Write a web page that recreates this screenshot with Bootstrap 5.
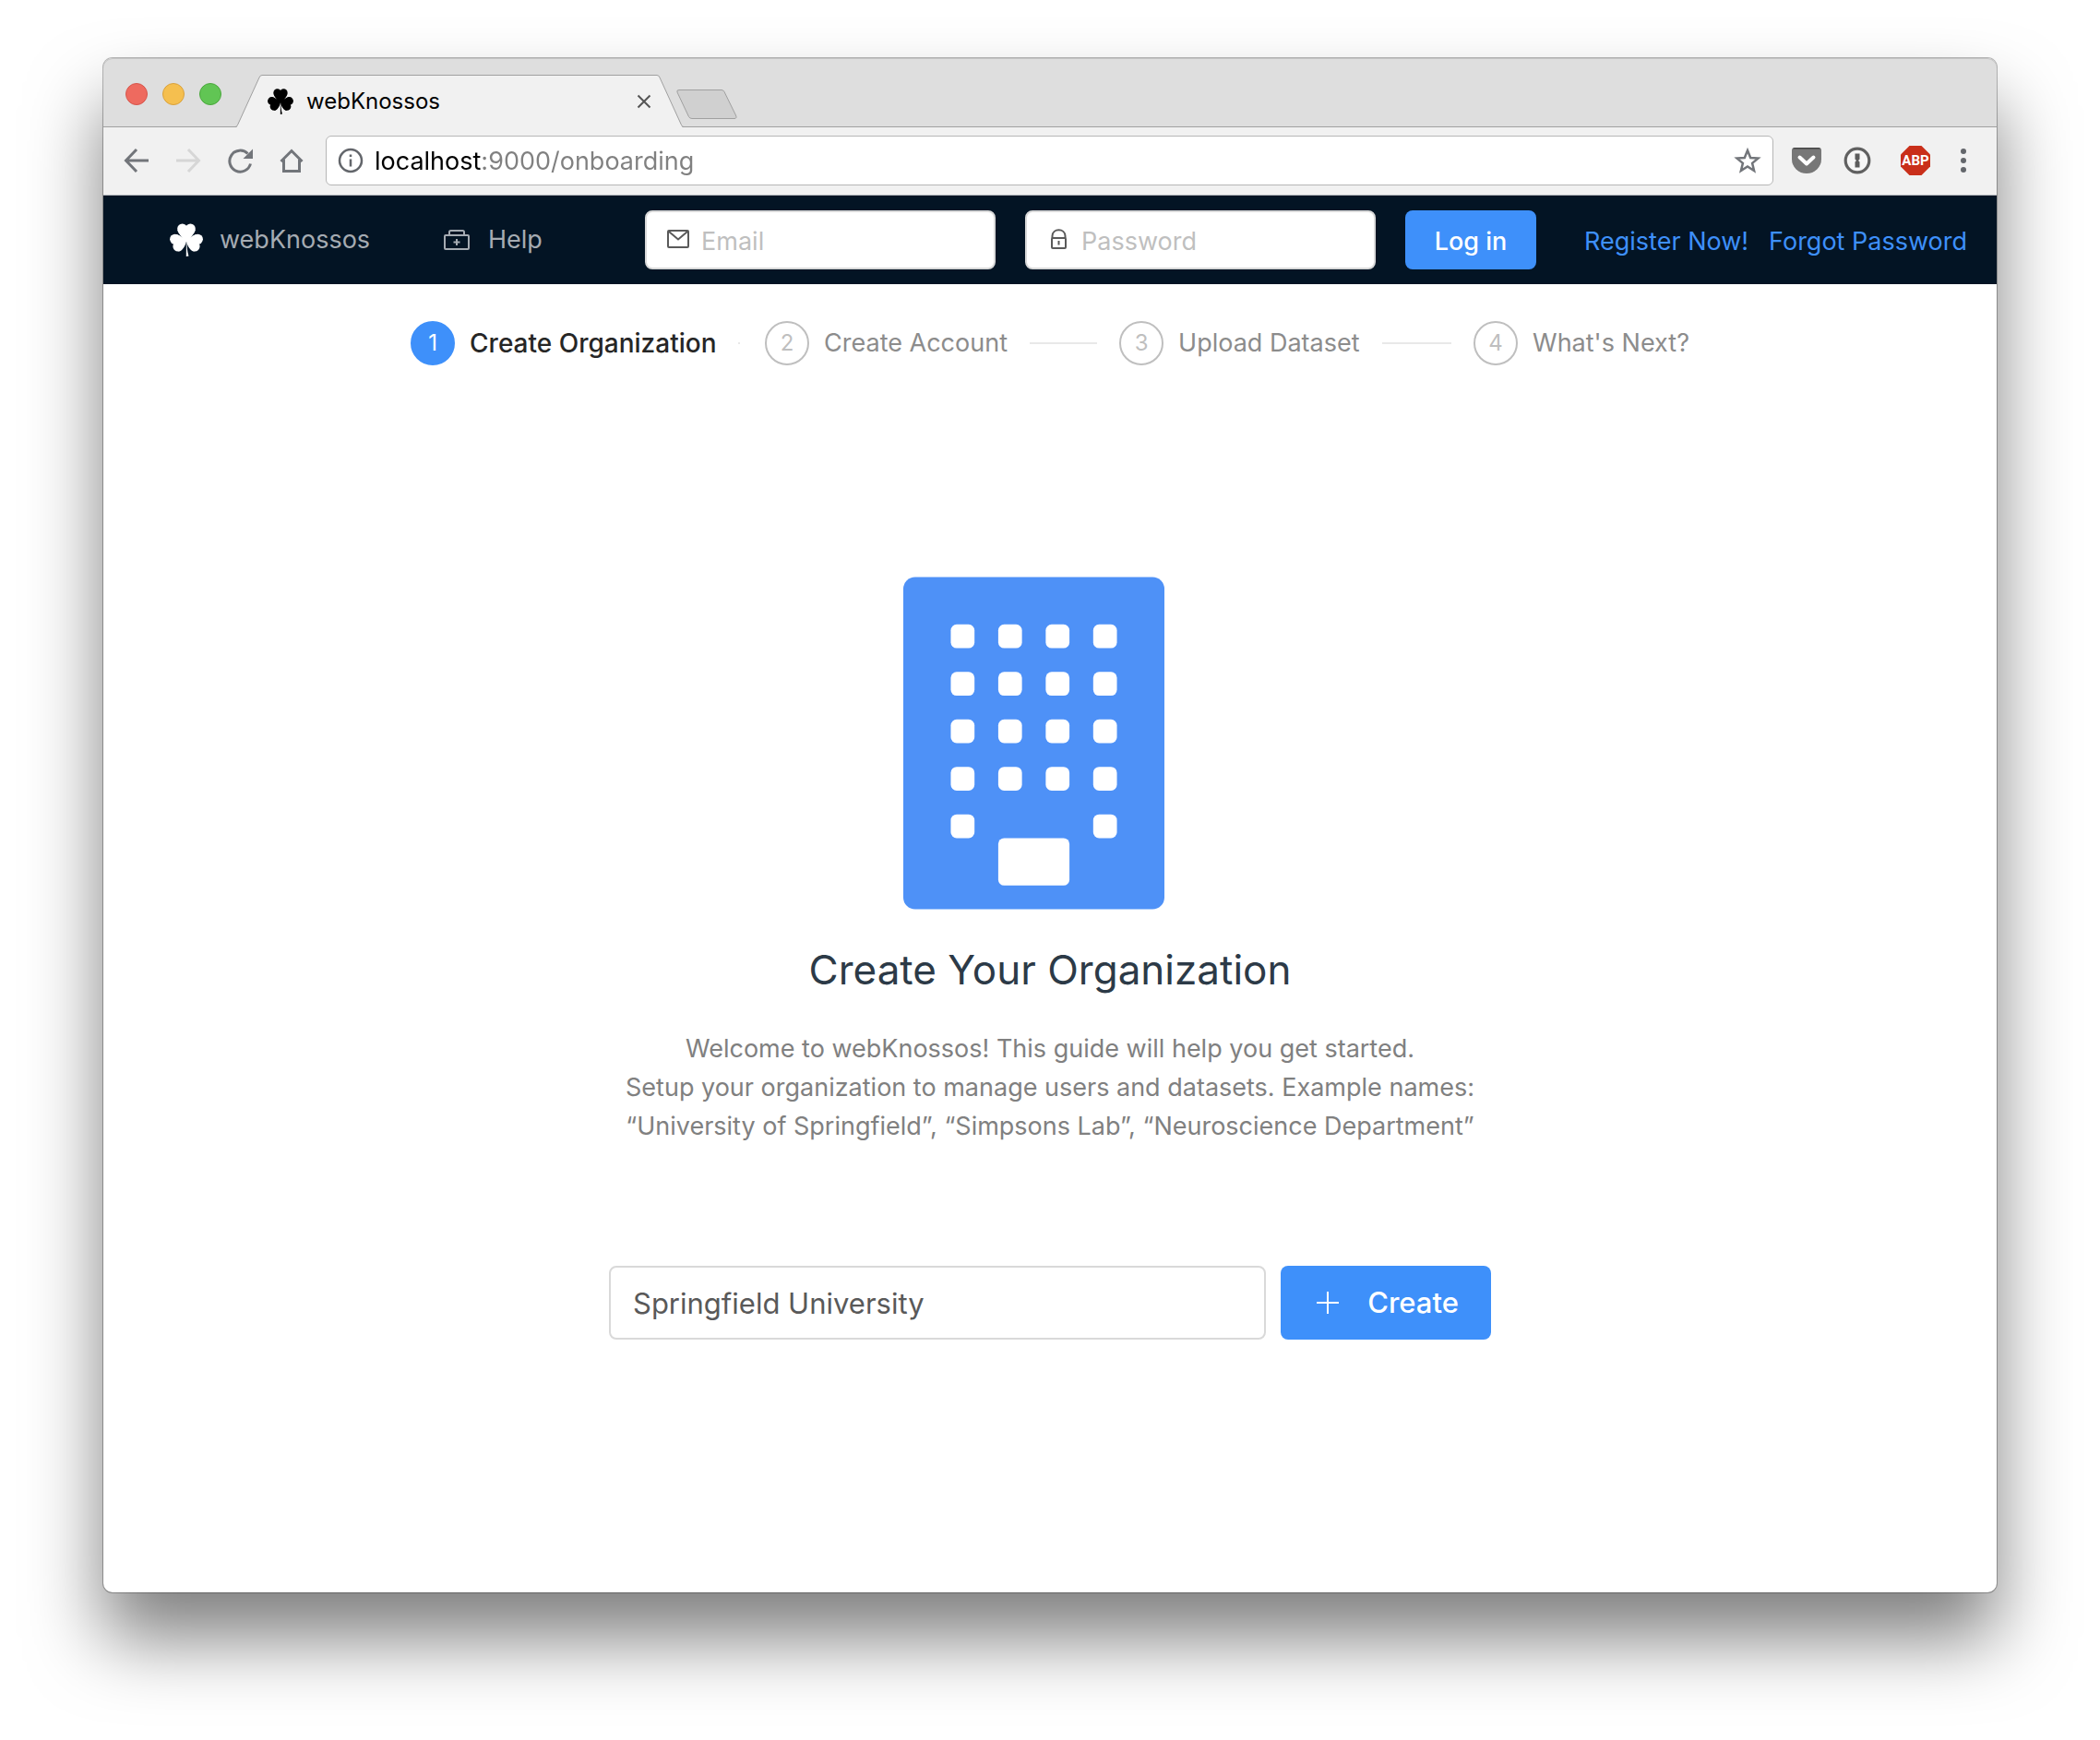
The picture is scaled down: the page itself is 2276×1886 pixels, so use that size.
<!DOCTYPE html>
<html lang="en">
<head>
<meta charset="utf-8">
<meta name="viewport" content="width=device-width, initial-scale=1">
<title>webKnossos</title>
<link href="https://cdn.jsdelivr.net/npm/bootstrap@5.3.0/dist/css/bootstrap.min.css" rel="stylesheet">
<style>
  :root { --wk-blue: #3e90fa; --wk-navy: #031424; --chrome-line: #a0a0a0; }
  body { font-family: Inter, "Liberation Sans", sans-serif; font-size: 27px; line-height: 42px; background: #fff; padding: 63px 112px 160px; }
  svg { display: block; flex: none; }
  .browser { min-height: calc(100vh - 223px); border-radius: 10px; background: #fff;
    box-shadow: 0 0 0 1px rgba(0,0,0,.28), 0 50px 80px rgba(0,0,0,.5); }
  .tabstrip { height: 75px; background: #dedede; border-radius: 10px 10px 0 0; box-shadow: inset 0 1px #c4c4c4, inset 0 -1px var(--chrome-line); padding-left: 24px; }
  .light { width: 24px; height: 24px; border-radius: 50%; border: 1px solid; padding: 0; }
  .light-close { background: #ee6a5f; border-color: #d6554b; }
  .light-min { background: #f5bf4f; border-color: #d9a13c; }
  .light-max { background: #61c554; border-color: #4aa73c; }
  .lights { gap: 16px; margin-bottom: 24px; }
  .page-tab { width: 486px; height: 57px; margin-left: 15px; padding: 0 35px 0 35px; gap: 14px; font-size: 24px; color: #000; }
  .page-tab .tab-shape { position: absolute; inset: 0; z-index: 0; }
  .page-tab > :not(.tab-shape) { position: relative; z-index: 1; }
  .icon-btn { border: 0; background: none; padding: 0; color: #72757a; }
  .newtab { margin: 0 0 9px -8px; }
  .toolbar { height: 74px; background: #f1f1f1; border-bottom: 1px solid #b0b3b8; padding: 0 32px 2px 20px; }
  .nav-icons { gap: 26px; padding-right: 23px; }
  .address { height: 54px; border: 1px solid #b6b6b6; border-radius: 6px; background: #fff; padding: 0 12px; gap: 12px; }
  .address input { border: 0; outline: 0; padding: 2px 0 0; color: transparent; caret-color: #000;
    background: linear-gradient(90deg, #000 116px, #808080 116px); -webkit-background-clip: text; background-clip: text; }
  .wk-nav { background: var(--wk-navy); padding: 16px 32px 16px 72px; color: #a5abb2; }
  .wk-nav a { text-decoration: none; }
  .brand-link, .help-link { color: inherit; }
  .brand-link { gap: 18px; width: 297px; }
  .help-link { gap: 20px; }
  .login-row { gap: 32px; }
  .field { width: 380px; height: 64px; border: 2px solid #d9d9d9; border-radius: 8px; background: #fff; padding: 0 20px 0 22px; gap: 13px; }
  .field input { border: 0; outline: 0; padding: 0; background: none; color: #5a5a5a; }
  .field input::placeholder { color: #bfbfbf; opacity: 1; }
  .wk-btn { background: var(--wk-blue); color: #fff; border: 0; border-radius: 8px; font-size: inherit; font-weight: 500; line-height: 42px; }
  .wk-btn:hover { background: #2f7fe8; color: #fff; }
  .login-btn { width: 142px; height: 64px; padding: 0; }
  .field input, .login-btn, .auth-links { padding-top: 4px; }
  .auth-links { gap: 22px; padding-left: 20px; }
  .auth-links a { color: var(--wk-blue); }
  .steps { padding-top: 40px; color: #8c8c8c; }
  .step { width: 384px; gap: 16px; }
  .step:last-child { width: auto; }
  .step-num { width: 48px; height: 48px; border: 2px solid #bfbfbf; border-radius: 50%; color: #bfbfbf; font-size: 24px; flex: none; }
  .step-active { color: #262626; font-weight: 500; font-size: 28px; }
  .step-active .step-num { background: var(--wk-blue); border-color: var(--wk-blue); color: #fff; font-weight: 400; }
  .step-line { height: 2px; background: #e8e8e8; margin: 0 24px 0 8px; min-width: 2px; }
  .intro { padding-bottom: 45px; color: #808080; }
  .building { margin-right: 36px; }
  .intro h1 { font-size: 44px; line-height: 60px; font-weight: 400; color: #2c3a47; margin: 35px 0; }
  .intro p { margin-bottom: 130px; }
  .org-form { width: 956px; max-width: 100%; gap: 16px; font-size: 31px; }
  .org-input { height: 80px; border: 2px solid #d9d9d9; border-radius: 8px; padding: 0 24px; font-size: inherit; color: #595959; }
  .create-btn { width: 228px; height: 80px; gap: 31px; padding: 0 0 0 4px; }
</style>
<script src="https://cdn.jsdelivr.net/npm/bootstrap@5.3.0/dist/js/bootstrap.bundle.min.js"></script>
</head>
<body>
<svg width="0" height="0" class="position-absolute" aria-hidden="true">
  <symbol id="clover" viewBox="0 0 36 36">
    <g fill="currentColor">
      <circle cx="13.600" cy="5.800" r="5.400"/><circle cx="22.400" cy="5.800" r="5.400"/>
      <path d="M8.300 7C9 12 13.500 14 15.500 20h5C22.500 14 27 12 27.700 7L18 3z"/>
      <circle cx="5.700" cy="17.300" r="5.600"/><circle cx="9" cy="25" r="5.600"/>
      <path d="M7 11.900C11 12.500 14 16 18 18.500 17.500 24 14 29.500 9.500 30.500L3 20z"/>
      <circle cx="30.300" cy="17.300" r="5.600"/><circle cx="27" cy="25" r="5.600"/>
      <path d="M29 11.900C25 12.500 22 16 18 18.500 18.500 24 22 29.500 26.500 30.500L33 20z"/>
      <path d="M17.700 20h.8c0 5 .4 10 2 15.500l-2.700.5C17.800 31 18 25 17.700 20z"/>
    </g>
  </symbol>
</svg>

<div class="browser d-flex flex-column">
  <header>
    <div class="tabstrip d-flex align-items-end">
      <div class="lights d-flex">
        <button class="light light-close" aria-label="Close window"></button>
        <button class="light light-min" aria-label="Minimize window"></button>
        <button class="light light-max" aria-label="Zoom window"></button>
      </div>
      <div class="page-tab position-relative d-flex align-items-center">
        <svg class="tab-shape" width="486" height="57" viewBox="0 0 486 57"><path d="M1 57C2 56.500 2 56 2.500 55L26 3Q27 .5 29 .5H457Q459 .5 460 3L483.500 55Q484 56.500 485 57z" fill="#f1f1f1"/><path d="M0 56.500Q1.500 56.500 2.500 54.500L26 3Q27 .5 29 .5H457Q459 .5 460 3L483.500 54.500Q484.500 56.500 486 56.500" fill="none" stroke="#a0a0a0"/></svg>
        <svg width="28" height="28" class="text-black"><use href="#clover"/></svg>
        <span class="flex-grow-1">webKnossos</span>
        <button class="icon-btn" aria-label="Close tab"><svg width="16" height="16" viewBox="0 0 16 16" stroke="#555" stroke-width="2"><path d="M1.500 1.500l13 13M14.500 1.500l-13 13"/></svg></button>
      </div>
      <button class="icon-btn newtab" aria-label="New tab"><svg width="66" height="32" viewBox="0 0 66 32"><path d="M3 .5H49Q51 .5 52 2.500L64.500 28Q66 31.500 63 31.500H17Q14.500 31.500 13.500 29.500L1 3Q0 .5 3 .5z" fill="#d0d0d0" stroke="#a0a0a0"/></svg></button>
    </div>
    <div class="toolbar d-flex align-items-center">
      <div class="nav-icons d-flex">
        <button class="icon-btn" aria-label="Back"><svg width="30" height="30" viewBox="0 0 30 30" fill="none" stroke="currentColor" stroke-width="3"><path d="M29 15H5M16 3L4.500 15 16 27"/></svg></button>
        <button class="icon-btn" aria-label="Forward" disabled><svg width="30" height="30" viewBox="0 0 30 30" fill="none" stroke="#d6d6d6" stroke-width="3"><path d="M3 15H27M16 3L27.500 15 16 27"/></svg></button>
        <button class="icon-btn" aria-label="Reload"><svg width="30" height="30" viewBox="0 0 30 30" fill="none" stroke="currentColor" stroke-width="3"><path d="M27.500 18.500A11.500 11.500 0 1 1 24.500 7.500"/><path d="M30 2.500V13H19.500z" fill="currentColor" stroke="none"/></svg></button>
        <button class="icon-btn" aria-label="Home"><svg width="30" height="30" viewBox="0 0 30 30" fill="none" stroke="currentColor" stroke-width="3"><path d="M4.500 16L16 4.500 27.500 16M7.500 14V26.500H24.500V14"/></svg></button>
      </div>
      <div class="address d-flex align-items-center flex-grow-1">
        <svg width="28" height="28" viewBox="0 0 28 28" fill="none" stroke="#63666b" stroke-width="2.500"><circle cx="14" cy="14" r="12"/><path d="M14 12.500V20.500M14 7.500V10"/></svg>
        <input class="flex-grow-1" id="url" type="text" aria-label="Address" value="localhost:9000/onboarding">
        <button class="icon-btn" aria-label="Bookmark this page"><svg width="30" height="30" viewBox="0 0 30 30" fill="none" stroke="currentColor" stroke-width="2.500"><path d="M15 4l3.200 8 8.300.6-6.400 5.300 2 8.100L15 21.500 7.900 26l2-8.100L3.500 12.600l8.300-.6z"/></svg></button>
      </div>
      <div class="d-flex align-items-center ps-3">
        <button class="icon-btn ms-1" aria-label="Save to Pocket"><svg width="32" height="30" viewBox="0 0 32 30"><path d="M3 1H29Q32 1 32 4V13.500A16 15.500 0 0 1 0 13.500V4Q0 1 3 1z" fill="#777"/><path d="M1 2.500Q1.500 1 3 1H29Q30.500 1 31 2.500z" fill="#444"/><path d="M8.500 11.500L16 18.500 23.500 11.500" fill="none" stroke="#fff" stroke-width="4" stroke-linecap="round" stroke-linejoin="round"/></svg></button>
        <button class="icon-btn ms-4" aria-label="1Password"><svg width="30" height="30" viewBox="0 0 30 30"><circle cx="15" cy="15" r="12.800" fill="#f6f6f6" stroke="#606060" stroke-width="3.200"/><path d="M12.500 7.500H17.500V13.500L16 15 17.500 16.500V22.500H12.500V16.500L14 15 12.500 13.500z" fill="#5c5c5c"/></svg></button>
        <button class="icon-btn ms-4 ps-2" aria-label="Adblock Plus"><svg width="32" height="32" viewBox="0 0 32 32"><path d="M9.500 0H22.500L32 9.500V22.500L22.500 32H9.500L0 22.500V9.500z" fill="#c92f1a"/><text x="16" y="21" text-anchor="middle" font-family="Roboto, sans-serif" font-size="15" font-weight="700" fill="#fff">ABP</text></svg></button>
        <button class="icon-btn ms-4 ps-2" aria-label="Menu"><svg width="8" height="28" viewBox="0 0 8 28" fill="#63666b"><circle cx="4" cy="4" r="3"/><circle cx="4" cy="14" r="3"/><circle cx="4" cy="24" r="3"/></svg></button>
      </div>
    </div>
  </header>

  <nav class="wk-nav d-flex align-items-center justify-content-between">
    <div class="d-flex align-items-center">
      <a href="#" class="brand-link d-flex align-items-center"><svg width="36" height="36" class="text-white"><use href="#clover"/></svg>webKnossos</a>
      <a href="#" class="help-link d-flex align-items-center"><svg width="28" height="24" viewBox="0 0 28 24" fill="none" stroke="currentColor" stroke-width="2"><rect x="1" y="7" width="26" height="15" rx="1"/><path d="M6 7V3.500Q6 2 7.500 2H20.500Q22 2 22 3.500V7M14 11V18M10.500 14.500H17.500"/></svg>Help</a>
    </div>
    <form class="login-row d-flex align-items-center" onsubmit="return false">
      <div class="field d-flex align-items-center">
        <svg width="24" height="28" viewBox="0 0 24 28" fill="none" stroke="#5a5a5a" stroke-width="2"><rect x="1" y="4" width="22" height="18" rx="1"/><path d="M2 5L12 13.500 22 5"/></svg>
        <input class="w-100" id="email" type="email" aria-label="Email" placeholder="Email">
      </div>
      <div class="field d-flex align-items-center">
        <svg width="24" height="28" viewBox="0 0 24 28" fill="none" stroke="#5a5a5a" stroke-width="2"><rect x="5" y="12" width="15" height="11" rx="1"/><path d="M5.500 12V10C5.500 1 19.500 1 19.500 10V12M12.500 15V19.500"/></svg>
        <input class="w-100" id="password" type="password" aria-label="Password" placeholder="Password">
      </div>
      <button class="wk-btn login-btn" type="submit">Log in</button>
      <div class="auth-links d-flex"><a href="#">Register Now!</a><a href="#">Forgot Password</a></div>
    </form>
  </nav>

  <main class="d-flex flex-column flex-grow-1">
    <ol class="steps list-unstyled d-flex justify-content-center mb-0">
      <li class="step step-active d-flex align-items-center"><span class="step-num d-flex align-items-center justify-content-center">1</span><span class="text-nowrap">Create Organization</span><span class="step-line"></span></li>
      <li class="step d-flex align-items-center"><span class="step-num d-flex align-items-center justify-content-center">2</span><span class="text-nowrap">Create Account</span><span class="step-line flex-grow-1"></span></li>
      <li class="step d-flex align-items-center"><span class="step-num d-flex align-items-center justify-content-center">3</span><span class="text-nowrap">Upload Dataset</span><span class="step-line flex-grow-1"></span></li>
      <li class="step d-flex align-items-center"><span class="step-num d-flex align-items-center justify-content-center">4</span><span class="text-nowrap">What's Next?</span></li>
    </ol>
    <section class="intro d-flex flex-column flex-grow-1 align-items-center justify-content-center text-center">
      <svg class="building" width="283" height="361" viewBox="0 0 1408 1792" role="img" aria-label="Building">
        <rect width="1408" height="1792" rx="64" fill="#4e91f7"/>
        <g fill="#fff" id="windows"></g>
        <rect x="512" y="1408" width="384" height="256" rx="32" fill="#fff"/>
      </svg>
      <h1>Create Your Organization</h1>
      <p>Welcome to webKnossos! This guide will help you get started.<br>Setup your organization to manage users and datasets. Example names:<br>“University of Springfield”, “Simpsons Lab”, “Neuroscience Department”</p>
      <form class="org-form d-flex" onsubmit="return false">
        <input class="org-input flex-grow-1" id="org" type="text" aria-label="Organization name" value="Springfield University">
        <button class="wk-btn create-btn d-flex align-items-center justify-content-center" type="submit"><svg width="24" height="24" viewBox="0 0 24 24" stroke="#fff" stroke-width="2"><path d="M12 0V24M0 12H24"/></svg>Create</button>
      </form>
    </section>
  </main>
</div>
<script>
  // Five floors of windows; the two in the middle of the ground floor make room for the door.
  const floors = document.getElementById('windows');
  for (let row = 0; row < 5; row++) {
    for (let col = 0; col < 4; col++) {
      if (row === 4 && (col === 1 || col === 2)) continue;
      const pane = document.createElementNS('http://www.w3.org/2000/svg', 'rect');
      pane.setAttribute('x', 256 + col * 256);
      pane.setAttribute('y', 256 + row * 256);
      pane.setAttribute('width', 128);
      pane.setAttribute('height', 128);
      pane.setAttribute('rx', 32);
      floors.appendChild(pane);
    }
  }
</script>
</body>
</html>
